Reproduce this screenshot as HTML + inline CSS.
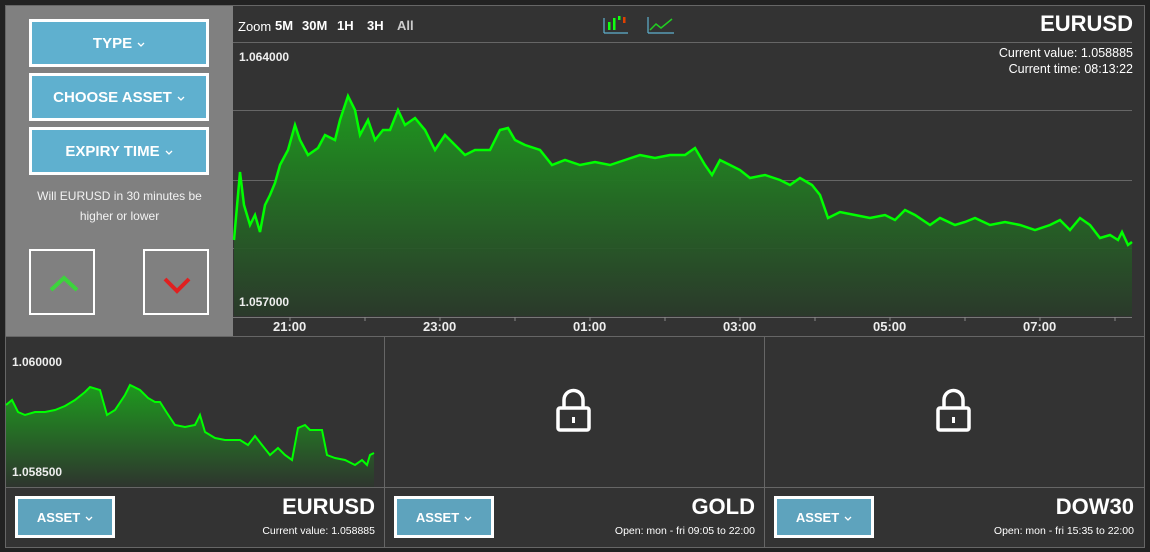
<!DOCTYPE html><html><head><style>
*{margin:0;padding:0;box-sizing:border-box}
body{width:1150px;height:552px;background:#222;font-family:"Liberation Sans",sans-serif;color:#fff;position:relative;overflow:hidden}
.a{position:absolute}
.btn{position:absolute;background:#5fb0cf;border:3px solid #fff;color:#fff;font-weight:bold;font-size:15px;display:flex;align-items:center;justify-content:center}
.sbtn{position:absolute;background:#5ea3bd;border:3px solid #fff;color:#fff;font-weight:bold;font-size:13px;display:flex;align-items:center;justify-content:center;width:100px;height:42px}
.cv{display:inline-block;width:8px;height:5px;margin-left:5px;margin-top:2px}
.lbl{position:absolute;font-size:12px;font-weight:bold;color:#eee}
.tk{position:absolute;top:319px;font-size:13px;font-weight:bold;color:#eee}
.z{position:absolute;top:18px;font-size:13px;font-weight:bold}
</style></head><body>
<div class="a" style="left:5px;top:5px;width:1140px;height:543px;border:1px solid #666;background:#333"></div>
<div class="a" style="left:6px;top:6px;width:227px;height:331px;background:#808080"></div>
<div class="btn" style="left:29px;top:19px;width:180px;height:48px">TYPE<svg class="cv" viewBox="0 0 8 5"><path d="M1 1L4 4L7 1" fill="none" stroke="#fff" stroke-width="1.3"/></svg></div>
<div class="btn" style="left:29px;top:73px;width:180px;height:48px">CHOOSE ASSET<svg class="cv" viewBox="0 0 8 5"><path d="M1 1L4 4L7 1" fill="none" stroke="#fff" stroke-width="1.3"/></svg></div>
<div class="btn" style="left:29px;top:127px;width:180px;height:48px">EXPIRY TIME<svg class="cv" viewBox="0 0 8 5"><path d="M1 1L4 4L7 1" fill="none" stroke="#fff" stroke-width="1.3"/></svg></div>
<div class="a" style="left:6px;top:186px;width:227px;text-align:center;font-size:12px;line-height:20px;color:#f2f2f2">Will EURUSD in 30 minutes be<br>higher or lower</div>
<div class="a" style="left:29px;top:249px;width:66px;height:66px;border:2px solid #fff"><svg width="62" height="62"><path d="M20 39 L33 27 L46 39" fill="none" stroke="#3cd43c" stroke-width="4"/></svg></div>
<div class="a" style="left:143px;top:249px;width:66px;height:66px;border:2px solid #fff"><svg width="62" height="62"><path d="M20 28 L32 40 L44 28" fill="none" stroke="#e02020" stroke-width="4"/></svg></div>
<!-- main chart -->
<div class="a" style="left:238px;top:19px;font-size:13px">Zoom</div>
<div class="z" style="left:275px">5M</div><div class="z" style="left:302px">30M</div><div class="z" style="left:337px">1H</div><div class="z" style="left:367px">3H</div><div class="z" style="left:397px;color:#ccc">All</div>
<svg class="a" style="left:600px;top:12px" width="80" height="24"><path d="M4 21H28M4 21V6" stroke="#5fb0cf" stroke-width="1.2"/><rect x="8" y="10" width="2.5" height="8" fill="#1f1"/><rect x="13" y="6" width="2.5" height="12" fill="#1f1"/><rect x="18" y="4" width="2.5" height="4" fill="#1f1"/><rect x="23" y="5" width="2.5" height="6" fill="#e04000"/><path d="M48 21H74M48 21V5" stroke="#5fb0cf" stroke-width="1.2"/><path d="M50 18L56 12L61 16L72 7" fill="none" stroke="#2c2" stroke-width="1.5"/></svg>
<div class="a" style="right:17px;top:11px;font-size:22px;font-weight:bold">EURUSD</div>
<div class="a" style="right:17px;top:45px;font-size:12.5px;text-align:right;line-height:16px">Current value: 1.058885<br>Current time: 08:13:22</div>
<div class="a" style="left:233px;top:42px;width:899px;height:1px;background:#666"></div>
<div class="a" style="left:233px;top:110px;width:899px;height:1px;background:#666"></div>
<div class="a" style="left:233px;top:180px;width:899px;height:1px;background:#666"></div>
<div class="a" style="left:233px;top:248px;width:899px;height:1px;background:#666"></div>
<div class="a" style="left:233px;top:317px;width:899px;height:1px;background:#777"></div>
<svg class="a" style="left:0;top:0" width="1150" height="340"><defs><linearGradient id="g" x1="0" y1="0" x2="0" y2="1"><stop offset="0" stop-color="#1e9a1e"/><stop offset="1" stop-color="#2a3a2a" stop-opacity=".9"/></linearGradient><linearGradient id="g2" x1="0" y1="0" x2="0" y2="1"><stop offset="0" stop-color="#1e9a1e"/><stop offset="1" stop-color="#2e352e"/></linearGradient></defs>
<path d="M234,240 L240,172 244,205 250,225 255,215 260,232 265,205 270,195 275,183 280,165 288,150 295,125 300,140 308,155 318,148 325,135 335,140 340,120 348,96 355,110 360,135 368,120 375,140 383,130 390,130 398,110 405,125 415,118 425,130 435,150 445,135 455,145 465,155 475,150 490,150 500,130 508,128 515,140 525,145 540,150 552,165 565,160 580,165 595,162 610,165 625,160 640,155 655,158 670,155 685,155 695,148 705,165 712,175 720,160 730,165 740,170 750,178 765,175 780,180 790,185 800,178 812,185 820,195 828,218 840,212 855,215 870,218 885,215 895,220 905,210 915,215 930,225 940,218 955,225 965,222 975,218 990,225 1005,222 1020,225 1035,230 1050,225 1060,220 1070,230 1080,218 1090,225 1100,238 1110,235 1118,240 1122,232 1128,245 1132,242 L1132,316 L234,316Z" fill="url(#g)"/>
<path d="M234,240 L240,172 244,205 250,225 255,215 260,232 265,205 270,195 275,183 280,165 288,150 295,125 300,140 308,155 318,148 325,135 335,140 340,120 348,96 355,110 360,135 368,120 375,140 383,130 390,130 398,110 405,125 415,118 425,130 435,150 445,135 455,145 465,155 475,150 490,150 500,130 508,128 515,140 525,145 540,150 552,165 565,160 580,165 595,162 610,165 625,160 640,155 655,158 670,155 685,155 695,148 705,165 712,175 720,160 730,165 740,170 750,178 765,175 780,180 790,185 800,178 812,185 820,195 828,218 840,212 855,215 870,218 885,215 895,220 905,210 915,215 930,225 940,218 955,225 965,222 975,218 990,225 1005,222 1020,225 1035,230 1050,225 1060,220 1070,230 1080,218 1090,225 1100,238 1110,235 1118,240 1122,232 1128,245 1132,242" fill="none" stroke="#0f0" stroke-width="2.5"/>
<g stroke="#888"><line x1="290" y1="317" x2="290" y2="321"/><line x1="365" y1="317" x2="365" y2="321"/><line x1="440" y1="317" x2="440" y2="321"/><line x1="515" y1="317" x2="515" y2="321"/><line x1="590" y1="317" x2="590" y2="321"/><line x1="665" y1="317" x2="665" y2="321"/><line x1="740" y1="317" x2="740" y2="321"/><line x1="815" y1="317" x2="815" y2="321"/><line x1="890" y1="317" x2="890" y2="321"/><line x1="965" y1="317" x2="965" y2="321"/><line x1="1040" y1="317" x2="1040" y2="321"/><line x1="1115" y1="317" x2="1115" y2="321"/></g>
</svg>
<div class="lbl" style="left:239px;top:50px">1.064000</div>
<div class="lbl" style="left:239px;top:295px">1.057000</div>
<div class="tk" style="left:273px">21:00</div><div class="tk" style="left:423px">23:00</div><div class="tk" style="left:573px">01:00</div><div class="tk" style="left:723px">03:00</div><div class="tk" style="left:873px">05:00</div><div class="tk" style="left:1023px">07:00</div>
<!-- bottom grid -->
<div class="a" style="left:5px;top:336px;width:1140px;height:1px;background:#666"></div>
<div class="a" style="left:384px;top:336px;width:1px;height:211px;background:#666"></div>
<div class="a" style="left:764px;top:336px;width:1px;height:211px;background:#666"></div>
<div class="a" style="left:5px;top:487px;width:1140px;height:1px;background:#666"></div>
<svg class="a" style="left:0;top:0" width="1150" height="552">
<path d="M6,405 L12,400 18,412 25,415 35,412 45,412 55,410 65,406 75,400 85,392 90,387 100,390 107,415 115,410 125,395 130,385 140,390 148,398 155,402 160,402 167,413 175,425 185,427 195,425 200,415 205,432 215,438 225,440 240,440 248,445 255,436 262,445 270,455 278,448 285,455 292,460 298,428 305,425 310,430 322,430 327,455 335,458 345,460 355,465 362,460 367,465 370,455 374,453 L374,487 L6,487Z" fill="url(#g2)"/>
<path d="M6,405 L12,400 18,412 25,415 35,412 45,412 55,410 65,406 75,400 85,392 90,387 100,390 107,415 115,410 125,395 130,385 140,390 148,398 155,402 160,402 167,413 175,425 185,427 195,425 200,415 205,432 215,438 225,440 240,440 248,445 255,436 262,445 270,455 278,448 285,455 292,460 298,428 305,425 310,430 322,430 327,455 335,458 345,460 355,465 362,460 367,465 370,455 374,453" fill="none" stroke="#0f0" stroke-width="2"/>
<g fill="none" stroke="#fff" stroke-width="3.5"><path d="M564,408V400a9.5,9.5 0 0 1 19,0V408"/><rect x="558" y="408" width="31" height="22" rx="2"/><path d="M944,408V400a9.5,9.5 0 0 1 19,0V408"/><rect x="938" y="408" width="31" height="22" rx="2"/></g>
<rect x="572" y="417" width="3" height="6" fill="#fff"/><rect x="952" y="417" width="3" height="6" fill="#fff"/>
</svg>
<div class="lbl" style="left:12px;top:355px">1.060000</div>
<div class="lbl" style="left:12px;top:465px">1.058500</div>
<div class="sbtn" style="left:15px;top:496px">ASSET<svg class="cv" viewBox="0 0 8 5"><path d="M1 1L4 4L7 1" fill="none" stroke="#fff" stroke-width="1.3"/></svg></div>
<div class="sbtn" style="left:394px;top:496px">ASSET<svg class="cv" viewBox="0 0 8 5"><path d="M1 1L4 4L7 1" fill="none" stroke="#fff" stroke-width="1.3"/></svg></div>
<div class="sbtn" style="left:774px;top:496px">ASSET<svg class="cv" viewBox="0 0 8 5"><path d="M1 1L4 4L7 1" fill="none" stroke="#fff" stroke-width="1.3"/></svg></div>
<div class="a" style="right:775px;top:494px;font-size:22px;font-weight:bold">EURUSD</div>
<div class="a" style="right:775px;top:525px;font-size:10.5px">Current value: 1.058885</div>
<div class="a" style="right:395px;top:494px;font-size:22px;font-weight:bold">GOLD</div>
<div class="a" style="right:395px;top:525px;font-size:10.5px">Open: mon - fri 09:05 to 22:00</div>
<div class="a" style="right:16px;top:494px;font-size:22px;font-weight:bold">DOW30</div>
<div class="a" style="right:16px;top:525px;font-size:10.5px">Open: mon - fri 15:35 to 22:00</div>
</body></html>
